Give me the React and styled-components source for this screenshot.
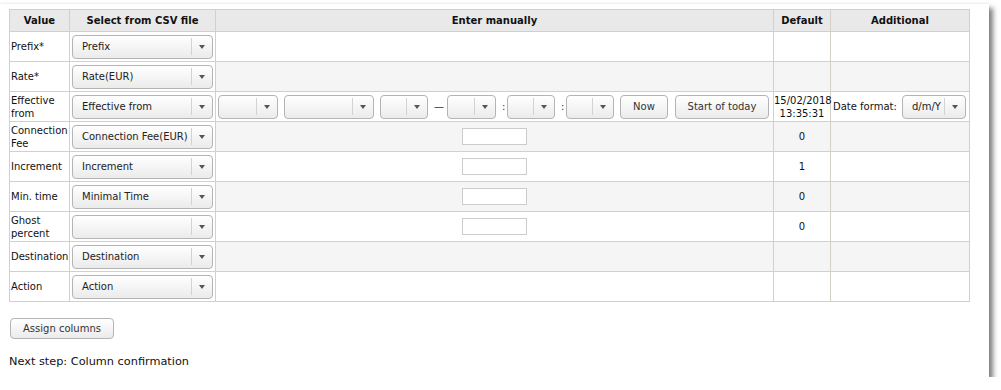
import React from 'react';
import styled, { createGlobalStyle } from 'styled-components';

const Global = createGlobalStyle`
  html, body { margin: 0; padding: 0; background: #fff; }
  body {
    font-family: "DejaVu Sans", Verdana, sans-serif;
    font-size: 10px;
    color: #111;
  }
`;

const Panel = styled.div`
  box-sizing: border-box;
  width: 989px;
  height: 373px;
  margin-top: 4px;
  padding: 5px 0 0 9px;
  background: #fff;
  box-shadow: 4px 4px 5px rgba(0, 0, 0, 0.5), 0 -1px 2px rgba(0, 0, 0, 0.06);
`;

const Table = styled.table`
  border-collapse: collapse;
  table-layout: fixed;
  width: 960px;
`;

const HeadCell = styled.th`
  height: 21px;
  padding: 0;
  background: #e9e9e9;
  border: 1px solid #d4d0c8;
  font-weight: bold;
  font-size: 10px;
  text-align: center;
  color: #111;
`;

const Row = styled.tr`
  height: 30px;
`;

const Cell = styled.td`
  height: 29px;
  padding: 0 ${p => p.$pad ?? 1}px;
  border: 1px solid #d4d0c8;
  background: ${p => (p.$alt ? '#f5f5f5' : '#fff')};
  text-align: ${p => p.$align || 'left'};
  vertical-align: middle;
  line-height: 13px;
  font-size: 10px;
`;

const SelectBox = styled.div`
  box-sizing: border-box;
  width: ${p => p.$w}px;
  height: 24px;
  border: 1px solid #b4b4b4;
  border-radius: 4px;
  background: linear-gradient(#ffffff, #ebebeb);
  display: flex;
  align-items: center;
  flex: none;
`;

const SelectText = styled.span`
  flex: 1;
  padding-left: ${p => p.$pl ?? 9}px;
  white-space: nowrap;
  overflow: hidden;
  color: #222;
`;

const SelectArrow = styled.span`
  width: 20px;
  height: 17px;
  border-left: 1px solid #d2d2d2;
  display: flex;
  align-items: center;
  justify-content: center;
  &::after {
    content: '';
    border-left: 3px solid transparent;
    border-right: 3px solid transparent;
    border-top: 4px solid #555;
  }
`;

const Button = styled.button`
  box-sizing: border-box;
  width: ${p => p.$w}px;
  height: ${p => p.$h || 24}px;
  margin-left: ${p => p.$ml || 0}px;
  border: 1px solid #b4b4b4;
  border-radius: 4px;
  background: linear-gradient(#ffffff, #ebebeb);
  font-family: "DejaVu Sans", Verdana, sans-serif;
  font-size: 10px;
  color: #333;
  padding: 0;
  flex: none;
`;

const DateRow = styled.div`
  display: flex;
  align-items: center;
  gap: 6px;
  padding-left: 2px;
`;

const Sep = styled.span`
  width: ${p => p.$w}px;
  text-align: center;
  color: #333;
  flex: none;
  margin-right: ${p => p.$mr || 0}px;
`;

const TextInput = styled.div`
  box-sizing: border-box;
  width: 65px;
  height: 17px;
  border: 1px solid #ccc;
  background: #fff;
  margin: 0 auto;
`;

const Additional = styled.div`
  display: flex;
  align-items: center;
  justify-content: space-between;
  padding: 0 2px 0 1px;
  white-space: nowrap;
`;

const Footer = styled.div`
  padding-left: 1px;
  margin-top: 16px;
`;

const NextStep = styled.div`
  margin-top: 16px;
  font-size: 11.3px;
  line-height: 13px;
  color: #111;
`;

const Select = ({ w, value, pl }) => (
  <SelectBox $w={w}>
    <SelectText $pl={pl}>{value}</SelectText>
    <SelectArrow />
  </SelectBox>
);

const rows = [
  { label: 'Prefix*', csv: 'Prefix' },
  { label: 'Rate*', csv: 'Rate(EUR)' },
  { label: 'Effective from', csv: 'Effective from', date: true },
  { label: 'Connection Fee', csv: 'Connection Fee(EUR)', input: true, def: '0' },
  { label: 'Increment', csv: 'Increment', input: true, def: '1' },
  { label: 'Min. time', csv: 'Minimal Time', input: true, def: '0' },
  { label: 'Ghost percent', csv: '', input: true, def: '0' },
  { label: 'Destination', csv: 'Destination' },
  { label: 'Action', csv: 'Action' },
];

const DateInputs = () => (
  <DateRow>
    <Select w={60} value="" />
    <Select w={90} value="" />
    <Select w={48} value="" />
    <Sep $w={8} $mr={-1}>—</Sep>
    <Select w={49} value="" />
    <Sep $w={3} $mr={-4}>:</Sep>
    <Select w={48} value="" />
    <Sep $w={3} $mr={-4}>:</Sep>
    <Select w={48} value="" />
    <Button $w={48}>Now</Button>
    <Button $w={94} $ml={1}>Start of today</Button>
  </DateRow>
);

export default function App() {
  return (
    <>
      <Global />
      <Panel>
        <Table>
          <colgroup>
            <col style={{ width: 60 }} />
            <col style={{ width: 146 }} />
            <col style={{ width: 558 }} />
            <col style={{ width: 57 }} />
            <col style={{ width: 139 }} />
          </colgroup>
          <thead>
            <tr>
              <HeadCell>Value</HeadCell>
              <HeadCell>Select from CSV file</HeadCell>
              <HeadCell>Enter manually</HeadCell>
              <HeadCell>Default</HeadCell>
              <HeadCell>Additional</HeadCell>
            </tr>
          </thead>
          <tbody>
            {rows.map((r, i) => {
              const alt = i % 2 === 1;
              return (
                <Row key={r.label}>
                  <Cell>{r.label}</Cell>
                  <Cell $pad={2}>
                    <Select w={141} value={r.csv} />
                  </Cell>
                  <Cell $alt={alt} $pad={0} $align={r.input ? 'center' : 'left'}>
                    {r.date && <DateInputs />}
                    {r.input && <TextInput />}
                  </Cell>
                  <Cell $alt={alt} $align="center" $pad={0}>
                    {r.date ? (
                      <>
                        15/02/2018
                        <br />
                        13:35:31
                      </>
                    ) : (
                      r.def
                    )}
                  </Cell>
                  <Cell $alt={alt} $pad={1}>
                    {r.date && (
                      <Additional>
                        <span>Date format:</span>
                        <Select w={64} value="d/m/Y" pl={9} />
                      </Additional>
                    )}
                  </Cell>
                </Row>
              );
            })}
          </tbody>
        </Table>
        <Footer>
          <Button $w={104} $h={21}>Assign columns</Button>
        </Footer>
        <NextStep>Next step: Column confirmation</NextStep>
      </Panel>
    </>
  );
}
